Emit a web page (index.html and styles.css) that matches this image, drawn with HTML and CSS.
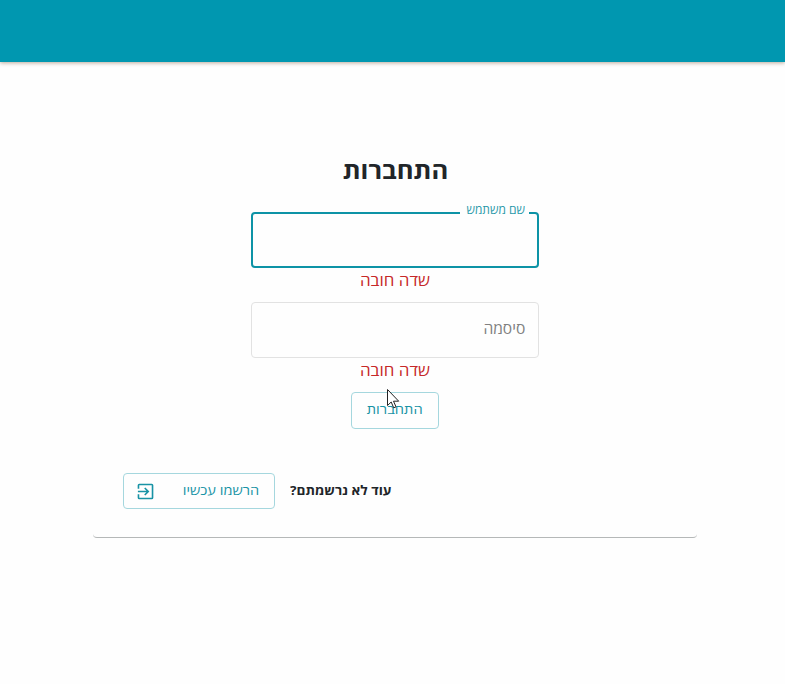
FILE: index.html
```html
<!DOCTYPE html>
<html lang="he" dir="rtl">
<head>
<meta charset="utf-8">
<title>התחברות</title>
<link rel="stylesheet" href="styles.css">
</head>
<body>
<header class="app-bar"></header>
<main class="card">
  <form class="login">
    <h1 class="title"><span>התחברות</span></h1>
    <div class="field field-active"><label class="float-label">שם משתמש</label></div>
    <p class="error"><span>שדה חובה</span></p>
    <div class="field"><span class="placeholder">סיסמה</span></div>
    <p class="error"><span>שדה חובה</span></p>
    <button class="btn submit" type="button"><span>התחברות</span></button>
  </form>
  <div class="signup">
    <strong class="question">עוד לא נרשמתם?</strong>
    <button class="btn register" type="button">
      <span>הרשמו עכשיו</span>
      <svg class="icon" viewBox="0 0 20 20" fill="none" stroke="currentColor" stroke-width="1.7"><path d="M2.6 7V3.4q0-.8.8-.8h13.2q.8 0 .8.8v13.2q0 .8-.8.8H3.4q-.8 0-.8-.8V13M2 10h10.5M9.2 6.3l3.7 3.7-3.7 3.7"/></svg>
    </button>
  </div>
</main>
<svg class="cursor" viewBox="0 0 13 20"><path d="M.5.5v16l3.7-3.5 2.5 5.8 2.3-1-2.5-5.6h5.2z" fill="#fff" stroke="#222"/></svg>
</body>
</html>
```
FILE: styles.css
```css
* { box-sizing: border-box; }
body {
  margin: 0;
  min-height: 684px;
  background: #fefefe;
  color: #212529;
  font-family: "Open Sans", "Noto Sans", "DejaVu Sans", sans-serif;
}
.app-bar {
  height: 62px;
  background: #0097b0;
  box-shadow: 0 1px 4px rgba(80, 40, 0, .4);
}
.card {
  width: 604px;
  height: 408px;
  margin: 68px 88px 0 0;
  padding: 20px 30px 0;
  border-bottom: 1px solid #b5b8b8;
  border-radius: 4px;
}
.login {
  display: flex;
  flex-direction: column;
  align-items: center;
}
.title {
  margin: 0 0 22px;
  height: 40px;
  line-height: 40px;
  font-size: 23.5px;
  font-weight: 700;
}
.title span,
.error span,
.btn span { display: inline-block; }
.title span { transform: scaleX(1.09); }
.field {
  position: relative;
  display: flex;
  justify-content: flex-start;
  width: 288px;
  height: 56px;
  padding: 0 13px;
  border: 1px solid #e2e2e2;
  border-radius: 4px;
}
.field-active { border: 2px solid #0d93a6; }
.float-label {
  position: absolute;
  top: -13px;
  right: 8px;
  height: 18px;
  padding: 0 4px 0 6px;
  line-height: 18px;
  background: #fefefe;
  color: #2a99a9;
  font-size: 12px;
}
.placeholder {
  line-height: 50px;
  font-size: 15px;
  color: #808080;
  transform: scaleX(1.04);
  transform-origin: right;
}
.error {
  margin: 0;
  height: 34px;
  line-height: 25px;
  font-size: 15px;
  color: #c62828;
}
.error span { transform: scaleX(1.13); }
.btn {
  border: 1px solid #a5d7de;
  border-radius: 4px;
  background: transparent;
  color: #1893a5;
  font-family: inherit;
  font-size: 13px;
}
.submit { width: 88px; height: 37px; padding: 0 0 3px; }
.submit span { transform: scaleX(1.13); }
.signup {
  display: flex;
  justify-content: flex-end;
  align-items: center;
  height: 36px;
  margin-top: 44px;
}
.question {
  margin: 0 0 2px 15px;
  font-size: 13px;
  transform: scaleX(1.045);
  transform-origin: left;
}
.register {
  display: flex;
  justify-content: space-between;
  align-items: center;
  width: 152px;
  height: 36px;
  padding: 0 15px 0 12px;
}
.register span {
  margin-bottom: 3px;
  transform: scaleX(1.12);
  transform-origin: right;
}
.icon { width: 19px; height: 19px; }
.cursor {
  position: absolute;
  left: 387px;
  top: 389px;
  width: 13px;
  height: 20px;
}
```
